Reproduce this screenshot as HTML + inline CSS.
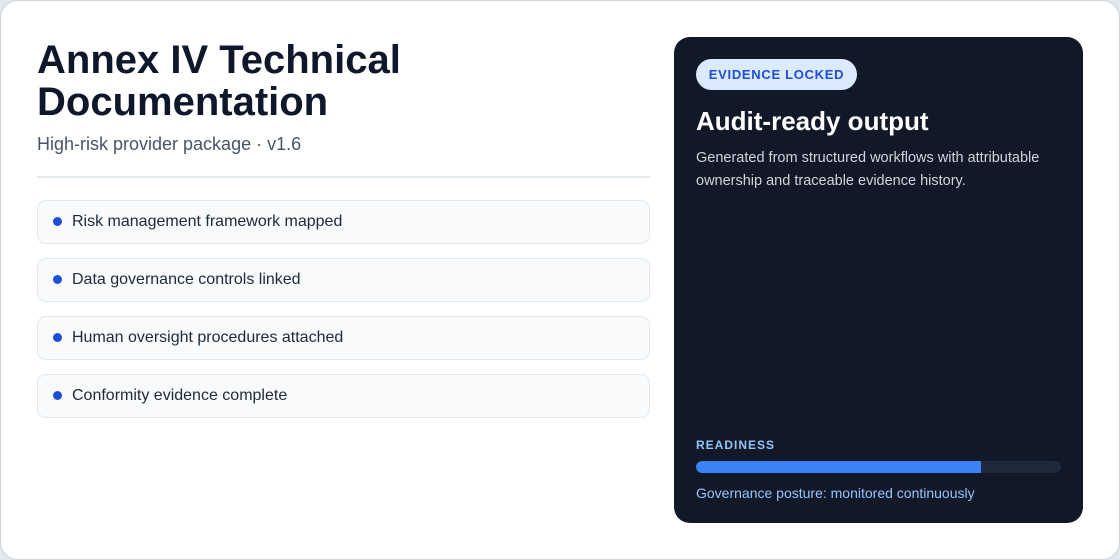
<!DOCTYPE html>
<html><head><style>
*{margin:0;padding:0;box-sizing:border-box}
html,body{width:1120px;height:560px;background:#e2e8f0;font-family:"Liberation Sans",Arial,sans-serif;overflow:hidden}
.card{position:absolute;left:0;top:0;width:1120px;height:560px;background:#fff;border:1px solid #cbd5e1;border-radius:18px}
.in{position:absolute;left:-1px;top:-1px;width:1120px;height:560px}
h1{position:absolute;left:37px;top:39px;font-size:40px;line-height:42px;font-weight:700;color:#0f172a;letter-spacing:0}
.sub{position:absolute;left:37px;top:134px;font-size:18px;color:#475569}
.hr{position:absolute;left:37px;top:176px;width:613px;height:2px;background:#e2e8f0}
.item{position:absolute;left:37px;width:613px;height:44px;background:#f8fafc;border:1px solid #e2e8f0;border-radius:9px;font-size:16px;color:#1e293b;line-height:42px;padding-left:34px}
.item:before{content:"";position:absolute;left:15px;top:16px;width:9px;height:9px;border-radius:50%;background:#1d4ed8}
.dark{position:absolute;left:674px;top:37px;width:409px;height:486px;background:#111827;border-radius:16px}
.badge{position:absolute;left:22px;top:22px;width:161px;height:31px;border-radius:16px;background:#dbeafe;color:#1d4ed8;font-size:13px;font-weight:700;letter-spacing:0.7px;text-align:center;line-height:31px}
.h2{position:absolute;left:22px;top:69px;font-size:26px;font-weight:700;color:#fff}
.p{position:absolute;left:22px;top:110px;width:380px;font-size:14.5px;line-height:23px;color:#d1d5db}
.rl{position:absolute;left:22px;top:401px;font-size:12px;font-weight:700;letter-spacing:1px;color:#93c5fd}
.bar{position:absolute;left:22px;top:424px;width:365px;height:12px;border-radius:6px;background:#1e293b;overflow:hidden}
.bar i{display:block;width:285px;height:12px;background:#3b82f6;border-radius:6px 0 0 6px}
.ft{position:absolute;left:22px;top:448px;font-size:14px;color:#93c5fd}
</style></head><body>
<div class="card"><div class="in">
<h1>Annex IV Technical<br>Documentation</h1>
<div class="sub">High-risk provider package · v1.6</div>
<div class="hr"></div>
<div class="item" style="top:200px">Risk management framework mapped</div>
<div class="item" style="top:258px">Data governance controls linked</div>
<div class="item" style="top:316px">Human oversight procedures attached</div>
<div class="item" style="top:374px">Conformity evidence complete</div>
<div class="dark">
<div class="badge">EVIDENCE LOCKED</div>
<div class="h2">Audit-ready output</div>
<div class="p">Generated from structured workflows with attributable ownership and traceable evidence history.</div>
<div class="rl">READINESS</div>
<div class="bar"><i></i></div>
<div class="ft">Governance posture: monitored continuously</div>
</div>
</div></div>
</body></html>
